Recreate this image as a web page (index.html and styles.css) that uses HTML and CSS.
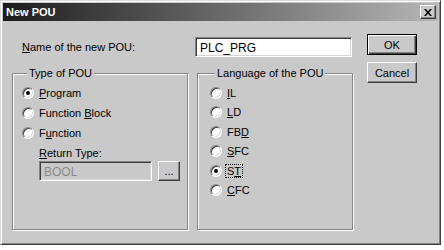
FILE: index.html
```html
<!DOCTYPE html>
<html lang="en">
<head>
    <meta charset="UTF-8">
    <title>New POU</title>
    <link rel="stylesheet" href="styles.css">
</head>
<body>
    <div class="window">
        <div class="titlebar">
            <span class="title">New POU</span>
            <button class="close-button">
                <svg width="8" height="7" viewBox="0 0 8 7"><path d="M0 0h2l2 2.5 2-2.5h2L5 3.5 8 7H6L4 4.5 2 7H0l3-3.5z" fill="#000"/></svg>
            </button>
        </div>
        <div class="client">
            <div class="main">
                <div class="name-row">
                    <label class="name-label"><u>N</u>ame of the new POU:</label>
                    <div class="text-input">PLC_PRG</div>
                </div>
                <div class="groups">
                    <fieldset class="group group-type">
                        <legend>Type of POU</legend>
                        <div class="option"><span class="radio checked"></span><span><u>P</u>rogram</span></div>
                        <div class="option"><span class="radio"></span><span>Function <u>B</u>lock</span></div>
                        <div class="option"><span class="radio"></span><span>F<u>u</u>nction</span></div>
                        <div class="return-type">
                            <div class="return-label"><u>R</u>eturn Type:</div>
                            <div class="return-row">
                                <div class="text-input disabled">BOOL</div>
                                <button class="button small-button">...</button>
                            </div>
                        </div>
                    </fieldset>
                    <fieldset class="group group-lang">
                        <legend>Language of the POU</legend>
                        <div class="option"><span class="radio"></span><span><u>I</u>L</span></div>
                        <div class="option"><span class="radio"></span><span><u>L</u>D</span></div>
                        <div class="option"><span class="radio"></span><span>FB<u>D</u></span></div>
                        <div class="option"><span class="radio"></span><span><u>S</u>FC</span></div>
                        <div class="option"><span class="radio checked"></span><span class="focused">S<u>T</u></span></div>
                        <div class="option"><span class="radio"></span><span><u>C</u>FC</span></div>
                    </fieldset>
                </div>
            </div>
            <div class="side">
                <button class="button default-button">OK</button>
                <button class="button">Cancel</button>
            </div>
        </div>
    </div>
</body>
</html>
```

FILE: styles.css
```css
body {
    margin: 0;
    background-color: #ffffff;
    font-family: "Liberation Sans", Arial, sans-serif;
    font-size: 11px;
    color: #000000;
}
.window {
    width: 441px;
    height: 245px;
    box-sizing: border-box;
    background-color: #c9c9c9;
    border: 1px solid;
    border-color: #dcdcdc #3c3c3c #3c3c3c #dcdcdc;
    box-shadow: inset 1px 1px #ffffff, inset -1px -1px #848484;
    padding: 2px;
}
.titlebar {
    height: 18px;
    display: flex;
    align-items: center;
    justify-content: space-between;
    padding: 0 2px 0 3px;
    background: linear-gradient(to right, #1c1c1c, #b6b6b6);
}
.title {
    color: #ffffff;
    font-weight: bold;
    font-size: 11px;
}
.close-button {
    width: 16px;
    height: 14px;
    padding: 0;
    display: flex;
    align-items: center;
    justify-content: center;
    background-color: #c9c9c9;
    border: 1px solid;
    border-color: #ffffff #3c3c3c #3c3c3c #ffffff;
    box-shadow: inset -1px -1px #848484;
}
.client {
    display: flex;
    padding: 13px 0 0 9px;
}
.main {
    width: 341px;
}
.name-row {
    display: flex;
    align-items: center;
    margin-top: 3px;
}
.name-label {
    width: 173px;
    padding-left: 10px;
}
.text-input {
    width: 157px;
    height: 20px;
    box-sizing: border-box;
    background-color: #ffffff;
    border: 1px solid;
    border-color: #848484 #ffffff #ffffff #848484;
    box-shadow: inset 1px 1px #3c3c3c, inset -1px -1px #d8d8d8;
    padding: 3px 0 0 4px;
    font-size: 12px;
}
.text-input.disabled {
    width: 113px;
    background-color: #c9c9c9;
    color: #8a8a8a;
}
.groups {
    display: flex;
    gap: 9px;
    margin-top: 10px;
}
.group {
    margin: 0;
    padding: 4px 0 0 9px;
    min-width: 0;
    height: 157px;
    border: 1px solid #848484;
    box-shadow: inset 1px 1px #ffffff, 1px 1px #ffffff;
}
.group-type {
    width: 165px;
}
.group-lang {
    width: 142px;
    padding-left: 12px;
}
.group legend {
    padding: 0 2px;
    margin-left: 5px;
    background-color: #c9c9c9;
}
.option {
    display: flex;
    align-items: center;
    gap: 5px;
    height: 20px;
}
.group-lang .option {
    height: 19.5px;
}
.radio {
    width: 12px;
    height: 12px;
    box-sizing: border-box;
    border-radius: 50%;
    background-color: #ffffff;
    border: 1px solid;
    border-color: #848484 #ffffff #ffffff #848484;
    box-shadow: inset 1px 1px #3c3c3c, inset -1px -1px #d8d8d8;
    display: flex;
    align-items: center;
    justify-content: center;
}
.radio.checked::after {
    content: "";
    width: 4px;
    height: 4px;
    border-radius: 50%;
    background-color: #000000;
}
.focused {
    outline: 1px dotted #000000;
    outline-offset: 0;
    padding: 0 1px;
    margin-left: -1px;
}
.return-type {
    padding-left: 17px;
    margin-top: 4px;
}
.return-label {
    margin-bottom: 2px;
}
.return-row {
    display: flex;
    gap: 6px;
}
.button {
    width: 50px;
    height: 21px;
    padding: 0;
    font-family: "Liberation Sans", Arial, sans-serif;
    font-size: 11px;
    color: #000000;
    background-color: #c9c9c9;
    border: 1px solid;
    border-color: #ffffff #3c3c3c #3c3c3c #ffffff;
    box-shadow: inset -1px -1px #848484;
}
.default-button {
    border: 1px solid #000000;
    box-shadow: inset 1px 1px #ffffff, inset -1px -1px #3c3c3c, inset -2px -2px #848484;
}
.small-button {
    width: 22px;
    height: 20px;
    line-height: 14px;
}
.side {
    display: flex;
    flex-direction: column;
    gap: 7px;
    margin-left: 14px;
}
```
